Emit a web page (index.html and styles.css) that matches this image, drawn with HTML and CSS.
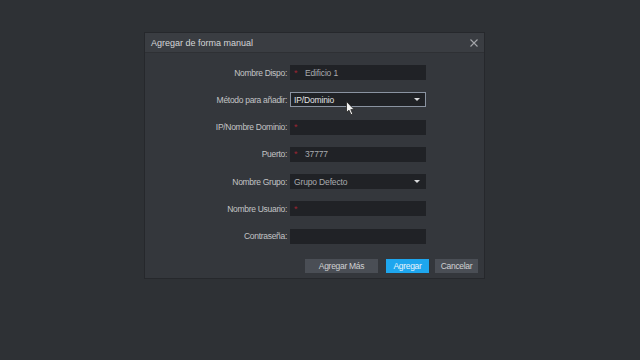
FILE: index.html
```html
<!DOCTYPE html>
<html>
<head>
<meta charset="utf-8">
<link rel="stylesheet" href="styles.css">
</head>
<body>
<div class="dialog">
  <div class="titlebar">
    <span class="title">Agregar de forma manual</span>
    <svg class="close" width="8" height="8" viewBox="0 0 8 8"><path d="M0.5 0.5L7.5 7.5M7.5 0.5L0.5 7.5" stroke="#a4a6aa" stroke-width="1.1"/></svg>
  </div>
  <div class="body">
    <div class="form">
      <div class="row"><label>Nombre Dispo:</label><div class="field"><span class="req">*</span><span class="val">Edificio 1</span></div></div>
      <div class="row"><label>Método para añadir:</label><div class="field select active"><span class="val bright">IP/Dominio</span><span class="caret"></span></div></div>
      <div class="row"><label>IP/Nombre Dominio:</label><div class="field"><span class="req">*</span></div></div>
      <div class="row"><label>Puerto:</label><div class="field"><span class="req">*</span><span class="val">37777</span></div></div>
      <div class="row"><label>Nombre Grupo:</label><div class="field select"><span class="val">Grupo Defecto</span><span class="caret"></span></div></div>
      <div class="row"><label>Nombre Usuario:</label><div class="field"><span class="req">*</span></div></div>
      <div class="row"><label>Contraseña:</label><div class="field"></div></div>
    </div>
    <div class="buttons">
      <button class="btn wide">Agregar Más</button>
      <button class="btn primary">Agregar</button>
      <button class="btn">Cancelar</button>
    </div>
  </div>
  <svg class="cursor" width="10" height="15" viewBox="0 0 10 15"><path d="M0.5 0.5L0.5 11.5L3 9.2L5 13.8L6.8 13L4.8 8.6L8.2 8.6Z" fill="#f2f2f2" stroke="#222" stroke-width="0.8"/></svg>
</div>
</body>
</html>
```

FILE: styles.css
```css
html, body {
  margin: 0;
  padding: 0;
}
body {
  background: #2e3135;
  width: 640px;
  height: 360px;
  overflow: hidden;
  font-family: "Liberation Sans", Arial, sans-serif;
  font-size: 9px;
  color: #c8c9cb;
}
.dialog {
  position: relative;
  margin: 33px 0 0 145px;
  width: 339px;
  height: 245px;
  background: #34373c;
  box-shadow: 0 0 0 1px #26282c;
  display: flex;
  flex-direction: column;
}
.titlebar {
  height: 20px;
  background: #3a3d42;
  display: flex;
  align-items: center;
  justify-content: space-between;
  padding: 0 6px;
  border-bottom: 1px solid #2e3034;
  box-sizing: border-box;
}
.title {
  color: #d4d5d7;
}
.body {
  flex: 1;
  display: flex;
  flex-direction: column;
  justify-content: space-between;
  padding: 12px 6px 5px 0;
}
.form {
  display: flex;
  flex-direction: column;
  gap: 12.3px;
}
.row {
  display: flex;
  align-items: center;
  height: 15px;
}
.row label {
  width: 142px;
  text-align: right;
  color: #c3c4c6;
  white-space: nowrap;
  font-size: 8.5px;
  letter-spacing: -0.3px;
}
.field {
  margin-left: 3px;
  width: 136px;
  height: 15px;
  box-sizing: border-box;
  background: #202226;
  display: flex;
  align-items: center;
  padding-left: 4px;
  position: relative;
}
.req {
  color: #9b2533;
  font-size: 9px;
  width: 11px;
  line-height: 9px;
  margin-top: 1px;
}
.val {
  color: #a9abae;
  font-size: 8.5px;
  letter-spacing: -0.15px;
}
.bright {
  color: #e3e4e6;
}
.active {
  border: 1px solid #8a93a1;
  padding-left: 3px;
}
.caret {
  position: absolute;
  right: 6px;
  top: 6px;
  width: 0;
  height: 0;
  border-left: 3px solid transparent;
  border-right: 3px solid transparent;
  border-top: 3px solid #d8d9db;
}
.active .caret {
  right: 5px;
  top: 5px;
}
.buttons {
  display: flex;
  justify-content: flex-end;
  gap: 7px;
}
.btn {
  font-family: "Liberation Sans", Arial, sans-serif;
  font-size: 8.5px;
  letter-spacing: -0.3px;
  height: 14px;
  padding: 0;
  width: 43px;
  border: none;
  background: #4a4e55;
  color: #d0d1d3;
}
.btn.wide {
  width: 73px;
  margin-right: 1px;
}
.btn.primary {
  background: #1ea6ee;
  color: #e8f4fc;
  margin-right: -1px;
}
.cursor {
  position: absolute;
  left: 201px;
  top: 68px;
}
```
